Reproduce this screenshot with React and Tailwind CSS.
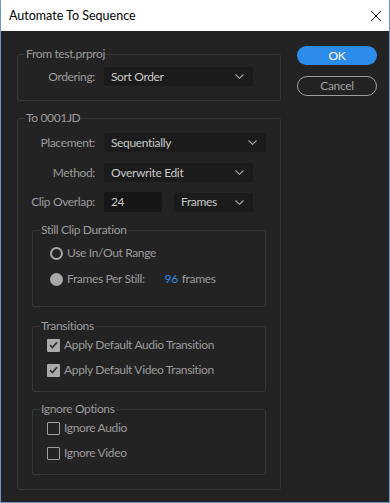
import React from "react";

const font = { fontFamily: "Lato, 'Noto Sans', sans-serif" };

function Chevron() {
  return (
    <svg width="9" height="5" viewBox="0 0 9 5" className="shrink-0">
      <path d="M0.5 0.5 L4.5 4.3 L8.5 0.5" fill="none" stroke="#a6a6a6" strokeWidth="1.1" />
    </svg>
  );
}

function Select({ value, width }) {
  return (
    <div className={`${width} h-[19px] bg-[#1b1b1b] rounded-[2px] flex items-center justify-between pl-[7px] pr-[9px] text-[#c8c8c8]`}>
      <span>{value}</span>
      <Chevron />
    </div>
  );
}

function Row({ label, children, className = "" }) {
  return (
    <div className={`flex items-center ${className}`}>
      <span className="w-[78px] text-right text-[#9b9b9b] pr-[1px]">{label}</span>
      <div className="ml-[8px] flex items-center">{children}</div>
    </div>
  );
}

function Group({ title, className = "", children }) {
  return (
    <fieldset className={`border border-[#363636] rounded-[2px] ${className}`}>
      <legend className="ml-[7px] px-[1px] leading-[16px] text-[#9b9b9b]">{title}</legend>
      {children}
    </fieldset>
  );
}

function Check({ checked, label, className = "" }) {
  return (
    <div className={`flex items-center h-[16px] ${className}`}>
      {checked ? (
        <span className="w-[13px] h-[13px] rounded-[1px] bg-[#a9a9a9] flex items-center justify-center">
          <svg width="9" height="8" viewBox="0 0 9 8">
            <path d="M1 4.2 L3.4 6.5 L8 1.2" fill="none" stroke="#2e2e2e" strokeWidth="1.6" />
          </svg>
        </span>
      ) : (
        <span className="w-[13px] h-[13px] rounded-[1px] border-[1.5px] border-[#a0a0a0]" />
      )}
      <span className="ml-[4px] text-[#9b9b9b]">{label}</span>
    </div>
  );
}

export default function App() {
  return (
    <div className="w-[390px] h-[503px] flex flex-col border-x border-b border-[#6d95c6] text-[12px] leading-[16px] tracking-[-0.35px]" style={font}>
      {/* Title bar */}
      <div className="h-[31px] bg-white flex items-center justify-between pl-[8px] pr-[7px] shrink-0">
        <span className="text-black text-[12.5px] tracking-normal">Automate To Sequence</span>
        <svg width="12" height="12" viewBox="0 0 12 12">
          <path d="M1 1 L11 11 M11 1 L1 11" stroke="#111" strokeWidth="1" />
        </svg>
      </div>

      {/* Body */}
      <div className="flex-1 bg-[#232323] flex pl-[16px] pt-[14px]">
        <div className="w-[264px] flex flex-col">
          <Group title="From test.prproj" className="mt-[1px] pt-[5px] pb-[14px]">
            <Row label="Ordering:">
              <Select value="Sort Order" width="w-[149px]" />
            </Row>
          </Group>

          <Group title="To 0001JD" className="mt-[9px] pt-[7px] pb-[14px]">
            <Row label="Placement:">
              <Select value="Sequentially" width="w-[162px]" />
            </Row>
            <Row label="Method:" className="mt-[11px]">
              <Select value="Overwrite Edit" width="w-[149px]" />
            </Row>
            <Row label="Clip Overlap:" className="mt-[10px]">
              <div className="w-[58px] h-[20px] bg-[#161616] rounded-[2px] flex items-center pl-[7px] text-[#c8c8c8]">24</div>
              <div className="ml-[12px]">
                <Select value="Frames" width="w-[79px]" />
              </div>
            </Row>

            <div className="mx-[14px] mt-[10px] flex flex-col">
              <Group title="Still Clip Duration" className="pt-[7px] pb-[19px]">
                <div className="pl-[17px]">
                  <div className="flex items-center h-[16px]">
                    <span className="w-[13px] h-[13px] rounded-full border-2 border-[#a8a8a8]" />
                    <span className="ml-[4px] text-[#9b9b9b]">Use In/Out Range</span>
                  </div>
                  <div className="flex items-center h-[16px] mt-[10px]">
                    <span className="w-[13px] h-[13px] rounded-full bg-[#a8a8a8]" />
                    <span className="ml-[4px] text-[#9b9b9b]">Frames Per Still:</span>
                    <span className="ml-[20px] text-[#2d8ceb]">96</span>
                    <span className="ml-[4px] text-[#9b9b9b]">frames</span>
                  </div>
                </div>
              </Group>

              <Group title="Transitions" className="mt-[11px] pt-[3px] pb-[13px]">
                <div className="pl-[14px]">
                  <Check checked label="Apply Default Audio Transition" />
                  <Check checked label="Apply Default Video Transition" className="mt-[9px]" />
                </div>
              </Group>

              <Group title="Ignore Options" className="mt-[9px] pt-[3px] pb-[13px]">
                <div className="pl-[14px]">
                  <Check label="Ignore Audio" />
                  <Check label="Ignore Video" className="mt-[9px]" />
                </div>
              </Group>
            </div>
          </Group>
        </div>

        {/* Buttons */}
        <div className="ml-[16px] pt-[1px] flex flex-col">
          <div className="w-[80px] h-[19px] rounded-full bg-[#2d8ceb] text-white flex items-center justify-center">OK</div>
          <div className="w-[80px] h-[20px] mt-[11px] rounded-full border-[1.5px] border-[#9e9e9e] text-[#a0a0a0] flex items-center justify-center">Cancel</div>
        </div>
      </div>
    </div>
  );
}
